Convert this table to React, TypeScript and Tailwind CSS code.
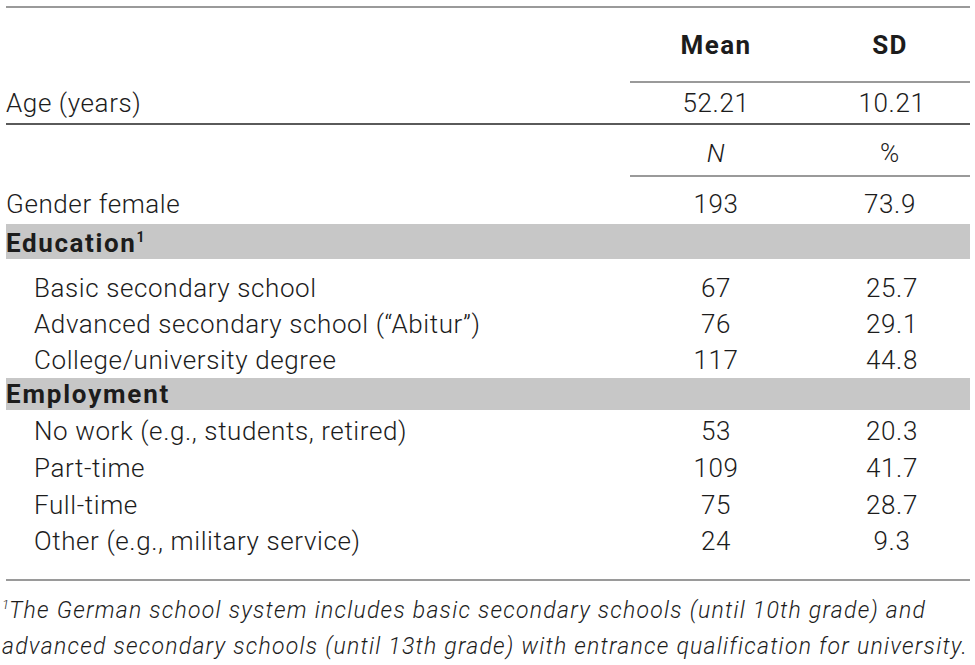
const font = { fontFamily: "Roboto, 'Liberation Sans', Arial, sans-serif" };

type Row = { label: string; n: string; pct: string };

const education: Row[] = [
  { label: "Basic secondary school", n: "67", pct: "25.7" },
  { label: "Advanced secondary school (\u201cAbitur\u201d)", n: "76", pct: "29.1" },
  { label: "College/university degree", n: "117", pct: "44.8" },
];

const employment: Row[] = [
  { label: "No work (e.g., students, retired)", n: "53", pct: "20.3" },
  { label: "Part-time", n: "109", pct: "41.7" },
  { label: "Full-time", n: "75", pct: "28.7" },
  { label: "Other (e.g., military service)", n: "24", pct: "9.3" },
];

function DataRow({ label, n, pct, h }: Row & { h: string }) {
  return (
    <div className={`flex items-center ${h}`}>
      <div className="flex-1 pl-[28px]">{label}</div>
      <div className="w-[172px] text-center">{n}</div>
      <div className="w-[168px] pl-[12px] text-center">{pct}</div>
    </div>
  );
}

export default function App() {
  return (
    <div
      className="w-[975px] h-[665px] bg-white text-[#1c1c1c] text-[26px] font-light leading-none px-[6px] pt-[6px] tracking-[0.6px]"
      style={font}
    >
      <div className="w-[964px] border-t-[2px] border-[#9a9a9a]">
        {/* header */}
        <div className="flex h-[73px] items-center">
          <div className="flex-1" />
          <div className="w-[172px] text-center font-bold tracking-[1.4px]">Mean</div>
          <div className="w-[168px] pl-[8px] text-center font-bold tracking-[1.4px]">SD</div>
        </div>
        <div className="flex">
          <div className="flex-1" />
          <div className="w-[340px] border-t-[2px] border-[#9a9a9a]" />
        </div>
        <div className="flex h-[42px] items-center border-b-[2px] border-[#5a5a5a]">
          <div className="flex-1">Age (years)</div>
          <div className="w-[172px] text-center">52.21</div>
          <div className="w-[168px] pl-[12px] text-center">10.21</div>
        </div>
        <div className="flex h-[50px] items-center pt-[6px]">
          <div className="flex-1" />
          <div className="w-[172px] text-center italic">N</div>
          <div className="w-[168px] pl-[8px] text-center">%</div>
        </div>
        <div className="flex">
          <div className="flex-1" />
          <div className="w-[340px] border-t-[2px] border-[#9a9a9a]" />
        </div>
        <div className="flex h-[47px] items-center pt-[6px]">
          <div className="flex-1">Gender female</div>
          <div className="w-[172px] text-center">193</div>
          <div className="w-[168px] pl-[8px] text-center">73.9</div>
        </div>
        <div className="flex h-[35px] items-center bg-[#c7c7c7] font-bold tracking-[1.6px] pt-[2px]">
          <div>
            Education<sup className="text-[14px] font-bold -top-[10px]">1</sup>
          </div>
        </div>
        <div className="pt-[11px]">
          {education.map((r) => (
            <DataRow key={r.label} {...r} h="h-[36px]" />
          ))}
        </div>
        <div className="flex h-[32px] items-center bg-[#c7c7c7] font-bold tracking-[1.8px]">
          <div>Employment</div>
        </div>
        <div className="pt-[3px]">
          {employment.map((r) => (
            <DataRow key={r.label} {...r} h="h-[36.67px]" />
          ))}
        </div>
        <div className="mt-[19px] border-t-[2px] border-[#9a9a9a]" />
        <div className="pt-[12px] italic text-[23px] tracking-[1.25px] leading-[36px] -ml-[4px]">
          <p>
            <sup className="text-[13px] -top-[9px] tracking-normal">1</sup>The German school system includes basic secondary schools (until 10th grade) and
          </p>
          <p>advanced secondary schools (until 13th grade) with entrance qualification for university.</p>
        </div>
      </div>
    </div>
  );
}
